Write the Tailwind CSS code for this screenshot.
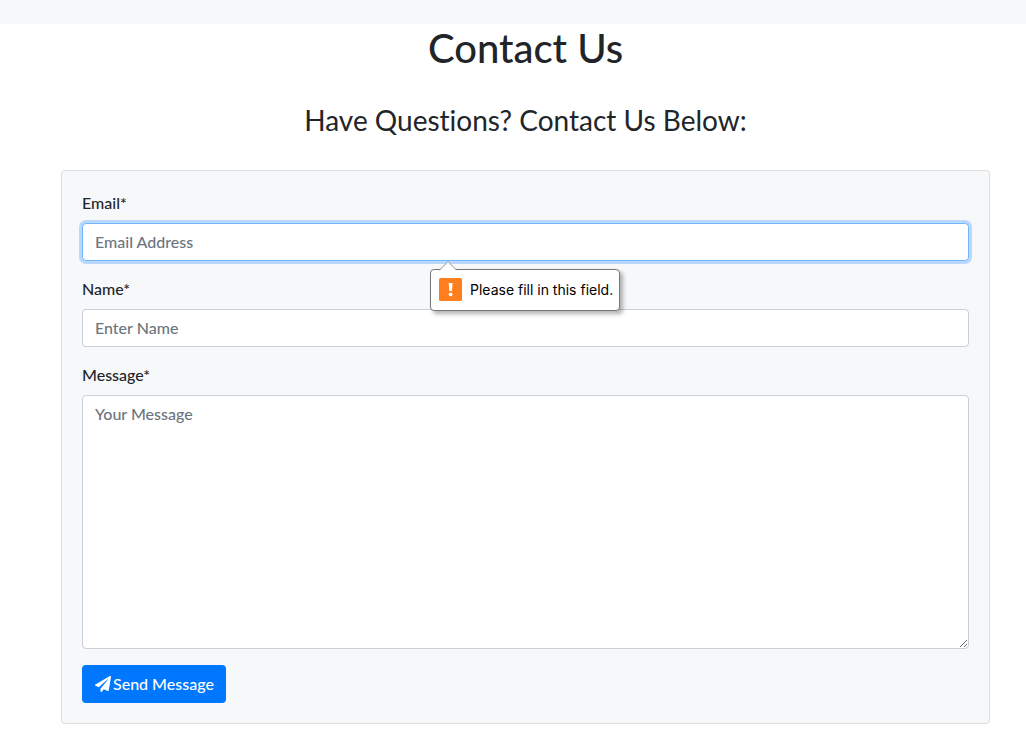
<!DOCTYPE html>
<html lang="en">
<head>
<meta charset="utf-8">
<meta name="viewport" content="width=device-width, initial-scale=1">
<title>Contact Us</title>
<script src="https://cdn.jsdelivr.net/npm/@tailwindcss/browser@4"></script>
</head>
<body class="bg-white font-['Lato',sans-serif] text-base font-normal text-[#212529] [font-variant-ligatures:none]">
<header class="h-6 bg-[#f7f8fa]"></header>
<main class="pl-[61px] pr-9 pb-4">
  <h1 class="text-center text-[40px] leading-[48px] font-medium">Contact Us</h1>
  <h2 class="mt-8 mb-[34px] text-center text-[28px] leading-8 font-normal">Have Questions? Contact Us Below:</h2>
  <form class="rounded border border-[#dcdddf] bg-[#f7f8fa] p-5" novalidate>
    <div class="relative mb-4">
      <label for="email" class="mb-2 block font-medium">Email*</label>
      <input id="email" type="email" placeholder="Email Address" class="block h-[38px] w-full rounded border border-[#73b5fc] bg-white px-3 pb-0.5 font-medium ring-3 ring-[#b9d8fb] outline-none placeholder:text-[#6c757d]">
      <div role="alert" class="absolute top-full left-[348px] z-10 mt-2 flex h-[42px] items-center gap-2 rounded border border-[#777777] bg-white pr-1.5 pb-px pl-2 font-['Inter',sans-serif] text-sm whitespace-nowrap text-black shadow-[3px_3px_4px_rgba(0,0,0,0.3)]">
        <svg class="absolute -top-[9px] left-[8px] h-[10px] w-[18px]" viewBox="0 0 18 10" aria-hidden="true"><path d="M0 10 9 .7 18 10Z" fill="#fff"/><path d="M.5 9 9 .7 17.500 9" fill="none" stroke="#999"/></svg>
        <svg class="h-[23px] w-[23px]" viewBox="0 0 23 23" aria-hidden="true"><rect width="23" height="23" rx="1.500" fill="#ff7f1f"/><path d="M9.700 5h3.800l-.5 8h-2.800z" fill="#fff"/><circle cx="11.600" cy="16.300" r="1.900" fill="#fff"/></svg>
        <span>Please fill in this field.</span>
      </div>
    </div>
    <div class="mb-4">
      <label for="name" class="mb-2 block font-medium">Name*</label>
      <input id="name" type="text" placeholder="Enter Name" class="block h-[38px] w-full rounded border border-[#c8cfd6] bg-white px-3 pb-0.5 font-medium outline-none placeholder:text-[#6c757d]">
    </div>
    <div class="mb-4">
      <label for="message" class="mb-2 block font-medium">Message*</label>
      <textarea id="message" rows="10" placeholder="Your Message" class="block w-full resize-y rounded border border-[#c8cfd6] bg-white px-3 py-1.5 font-medium outline-none placeholder:text-[#6c757d]"></textarea>
    </div>
    <button type="submit" class="flex h-[38px] items-center gap-0.5 rounded bg-[#0077ff] pr-3 pl-[13px] font-medium text-white">
      <svg class="h-4 w-4" viewBox="0 0 512 512" fill="currentColor" aria-hidden="true"><path d="M476 3.200 12.500 270.600c-18.100 10.400-15.800 35.600 2.200 43.200L121 358.400l287.300-253.200c5.500-4.900 13.300 2.600 8.600 8.300L176 407v80.500c0 23.600 28.500 32.900 42.500 15.800L282 426l124.600 52.200c14.200 6 30.400-2.900 33-18.200l72-432C515 7.800 493.300-6.800 476 3.200z"/></svg>
      <span>Send Message</span>
    </button>
  </form>
</main>
</body>
</html>
